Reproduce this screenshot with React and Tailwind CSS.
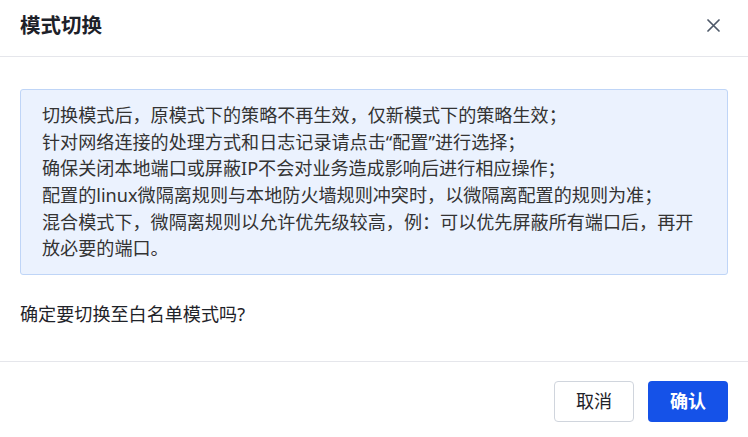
import React from 'react';

const lines = [
  '切换模式后，原模式下的策略不再生效，仅新模式下的策略生效；',
  '针对网络连接的处理方式和日志记录请点击“配置”进行选择；',
  '确保关闭本地端口或屏蔽IP不会对业务造成影响后进行相应操作；',
  '配置的linux微隔离规则与本地防火墙规则冲突时，以微隔离配置的规则为准；',
  '混合模式下，微隔离规则以允许优先级较高，例：可以优先屏蔽所有端口后，再开放必要的端口。',
];

export default function App() {
  return (
    <div className="w-[748px] h-[437px] bg-white overflow-hidden font-['Noto_Sans','Noto_Sans_CJK_SC',sans-serif] text-[#1f2329]">
      {/* Header */}
      <div className="h-[57px] pl-[20px] pr-[28px] flex items-center justify-between border-b border-[#e5e6eb]">
        <h2 className="text-[20.5px] leading-none font-bold text-[#1d2129] -mt-[6px]">模式切换</h2>
        <button className="-mt-[6px] text-[#4e5969]">
          <svg width="13" height="13" viewBox="0 0 13 13" fill="none">
            <path d="M1 1L12 12M12 1L1 12" stroke="currentColor" strokeWidth="1.7" strokeLinecap="round" />
          </svg>
        </button>
      </div>

      {/* Body */}
      <div className="pt-[32px] px-[20px] pb-[33px]">
        <div className="border border-[#bfd5f7] bg-[#ebf2fe] rounded-[3px] pl-[21px] pr-[30px] py-[12px] text-[18.1px] leading-[26.67px] text-[#333]">
          {lines.map((l) => (
            <p key={l}>{l}</p>
          ))}
        </div>
        <p className="mt-[26px] text-[18.1px] leading-[26.67px] text-[#1f2329]">确定要切换至白名单模式吗?</p>
      </div>

      {/* Footer */}
      <div className="border-t border-[#e5e6eb] pt-[19px] px-[20px] flex justify-end gap-[14px]">
        <button className="w-[80px] h-[41px] rounded-[4px] border border-[#d0d5dd] bg-white text-[18.1px] text-[#1f2329]">
          取消
        </button>
        <button className="w-[80px] h-[41px] rounded-[4px] bg-[#1552e8] text-[18.1px] font-semibold text-white">
          确认
        </button>
      </div>
    </div>
  );
}
